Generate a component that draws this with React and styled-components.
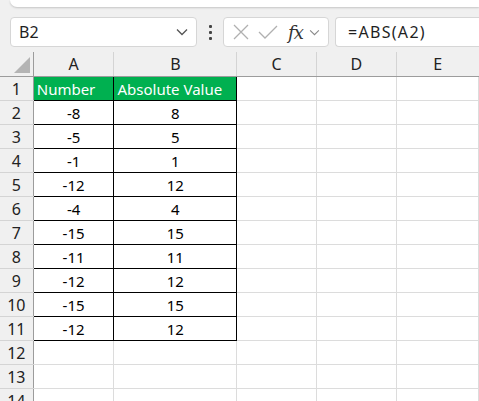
import React from 'react'
import styled, { createGlobalStyle } from 'styled-components'

const Global = createGlobalStyle`
  html, body {
    margin: 0;
    padding: 0;
    background: #f0f0f0;
    font-family: "Noto Sans", "Open Sans", sans-serif;
    overflow: hidden;
  }
`

const Page = styled.div`
  width: 479px;
  height: 401px;
  overflow: hidden;
  display: flex;
  flex-direction: column;
`

const TopStrip = styled.div`
  margin-left: 10px;
  height: 7px;
  background: #fff;
  border-bottom-left-radius: 8px;
  box-shadow: 0 1px 2px rgba(0, 0, 0, 0.18);
  flex-shrink: 0;
`

const FormulaBar = styled.div`
  margin-top: 10px;
  height: 30px;
  display: flex;
  align-items: center;
  padding-left: 10px;
  flex-shrink: 0;
`

const Box = styled.div`
  height: 30px;
  box-sizing: border-box;
  background: #fff;
  border: 1px solid #d6d6d6;
  border-radius: 4px;
  display: flex;
  align-items: center;
`

const NameBox = styled(Box)`
  width: 187px;
  justify-content: space-between;
  padding-right: 8px;
`

const NameText = styled.span`
  font-size: 16px;
  color: #1f1f1f;
  padding-left: 8px;
`

const Dots = styled.div`
  width: 26px;
  display: flex;
  flex-direction: column;
  align-items: center;
  gap: 3px;
  span {
    width: 3px;
    height: 3px;
    background: #444;
    border-radius: 1px;
  }
`

const ButtonsBox = styled(Box)`
  width: 106px;
  padding-left: 7px;
  gap: 6px;
`

const Fx = styled.span`
  font-family: "DejaVu Serif", "Liberation Serif", serif;
  font-style: italic;
  font-size: 18px;
  color: #333;
  margin-left: 3px;
  letter-spacing: -1px;
`

const InputBox = styled(Box)`
  margin-left: 6px;
  flex: 1;
  border-right: none;
  border-radius: 4px 0 0 4px;
  padding-left: 12px;
`

const FormulaText = styled.span`
  font-size: 16px;
  color: #1f1f1f;
  letter-spacing: 1.3px;
`

const Sheet = styled.table`
  margin-top: 5px;
  border-collapse: collapse;
  table-layout: fixed;
  background: #fff;
  font-size: 15px;
`

const ColHead = styled.th`
  height: 24px;
  width: ${({ $w }) => $w}px;
  background: #f0f0f0;
  font-weight: 400;
  font-size: 16px;
  color: #222;
  border-left: 1px solid #d4d4d4;
  border-bottom: 1px solid #9c9c9c;
  padding: 0;
  text-align: center;
`

const Corner = styled.th`
  width: 33px;
  height: 24px;
  background: #f0f0f0;
  border-right: 1px solid #9c9c9c;
  border-bottom: 1px solid #9c9c9c;
  padding: 0;
  position: relative;
`

const Tri = styled.div`
  position: absolute;
  right: 3px;
  bottom: 3px;
  width: 0;
  height: 0;
  border-left: 16px solid transparent;
  border-bottom: 16px solid #b4b4b4;
`

const RowHead = styled.th`
  height: 23px;
  background: #f0f0f0;
  font-weight: 400;
  font-size: 16px;
  color: #222;
  border-right: 1px solid #9c9c9c;
  border-bottom: 1px solid #d4d4d4;
  padding: 0;
  text-align: center;
`

const Cell = styled.td`
  height: 23px;
  padding: 0 3px;
  border: 1px solid ${({ $data }) => ($data ? '#000' : '#dcdcdc')};
  border-top-color: ${({ $data, $first }) => ($first ? '#9c9c9c' : $data ? '#000' : '#dcdcdc')};
  background: ${({ $head }) => ($head ? '#00b050' : '#fff')};
  color: ${({ $head }) => ($head ? '#fff' : '#000')};
  text-align: ${({ $head }) => ($head ? 'left' : 'center')};
  white-space: nowrap;
  overflow: hidden;
`

const cols = [
  { name: 'A', w: 80 },
  { name: 'B', w: 122 },
  { name: 'C', w: 80 },
  { name: 'D', w: 80 },
  { name: 'E', w: 83 },
]

const values = [-8, -5, -1, -12, -4, -15, -11, -12, -15, -12]

const Chevron = () => (
  <svg width="12" height="8" viewBox="0 0 12 8">
    <path d="M1 1.5 L6 6.5 L11 1.5" fill="none" stroke="#555" strokeWidth="1.3" />
  </svg>
)

const App = () => {
  const rows = [['Number', 'Absolute Value']]
  values.forEach((v) => rows.push([String(v), String(Math.abs(v))]))
  const total = 14

  return (
    <Page>
      <Global />
      <TopStrip />
      <FormulaBar>
        <NameBox>
          <NameText>B2</NameText>
          <Chevron />
        </NameBox>
        <Dots>
          <span />
          <span />
          <span />
        </Dots>
        <ButtonsBox>
          <svg width="20" height="20" viewBox="0 0 20 20">
            <path d="M3 3 L17 17 M17 3 L3 17" stroke="#b0b0b0" strokeWidth="1.3" />
          </svg>
          <svg width="22" height="20" viewBox="0 0 22 20">
            <path d="M2 10 L8 16 L20 4" fill="none" stroke="#b0b0b0" strokeWidth="1.3" />
          </svg>
          <Fx>fx</Fx>
          <svg width="11" height="7" viewBox="0 0 12 8">
            <path d="M1 1.5 L6 6.5 L11 1.5" fill="none" stroke="#888" strokeWidth="1.2" />
          </svg>
        </ButtonsBox>
        <InputBox>
          <FormulaText>=ABS(A2)</FormulaText>
        </InputBox>
      </FormulaBar>
      <Sheet>
        <thead>
          <tr>
            <Corner>
              <Tri />
            </Corner>
            {cols.map((c) => (
              <ColHead key={c.name} $w={c.w}>
                {c.name}
              </ColHead>
            ))}
          </tr>
        </thead>
        <tbody>
          {Array.from({ length: total }).map((_, i) => {
            const r = rows[i]
            return (
              <tr key={i}>
                <RowHead>{i + 1}</RowHead>
                {cols.map((c, j) => {
                  const data = r && j < 2
                  return (
                    <Cell key={c.name} $data={data} $head={data && i === 0} $first={i === 0}>
                      {data ? r[j] : ''}
                    </Cell>
                  )
                })}
              </tr>
            )
          })}
        </tbody>
      </Sheet>
    </Page>
  )
}

export default App
